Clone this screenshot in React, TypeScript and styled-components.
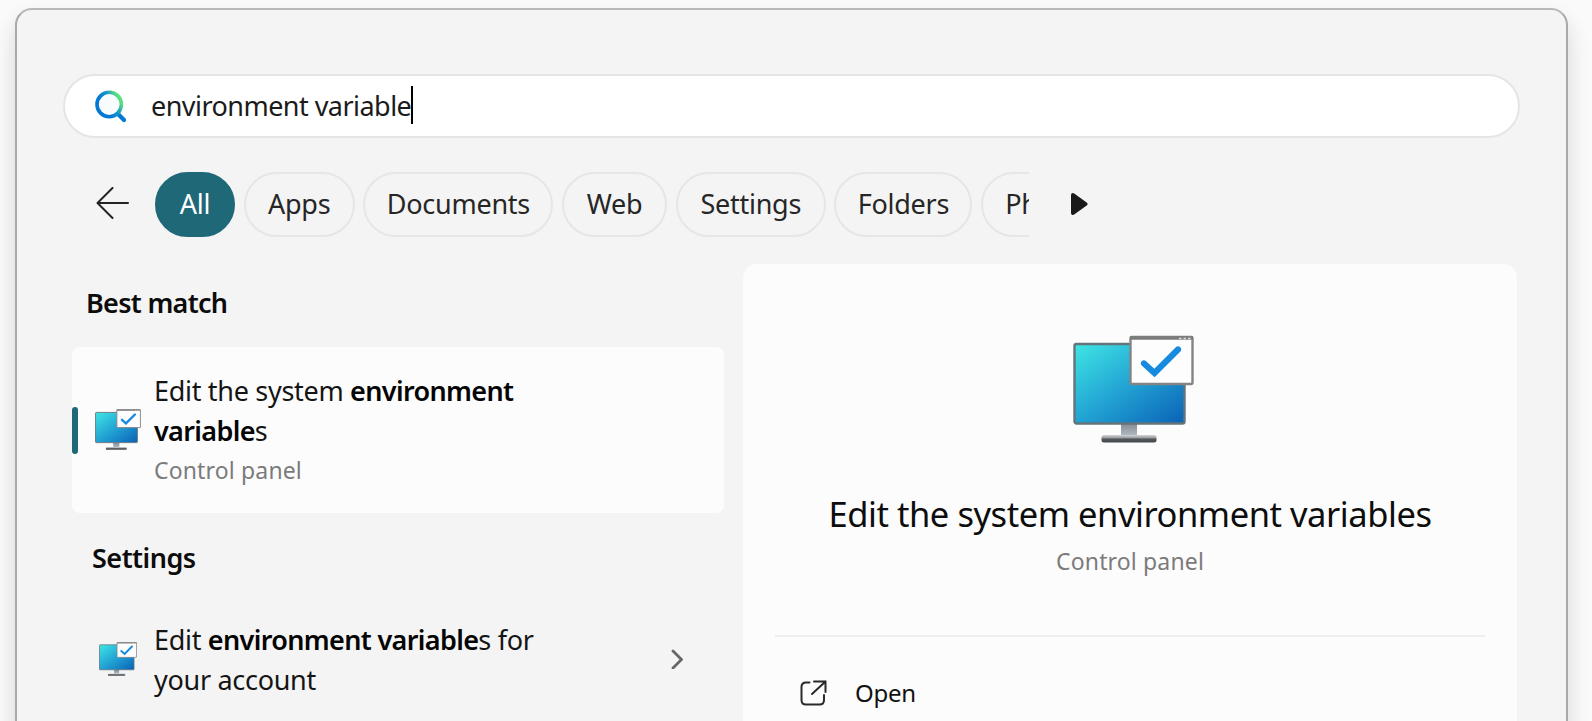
import React from "react";
import styled, { createGlobalStyle } from "styled-components";

const GlobalStyle = createGlobalStyle`
  * { box-sizing: border-box; }
  html, body { margin: 0; padding: 0; }
  body {
    background: #fafafa;
    font-family: "Noto Sans", "Open Sans", sans-serif;
    font-size: 27px;
    color: #1b1b1b;
    overflow: hidden;
  }
`;

const Desktop = styled.div`
  height: 721px;
  overflow: hidden;
  padding: 8px 24px 0 15px;
`;

const SearchWindow = styled.main`
  height: 800px;
  border: 2px solid #a9a9a9;
  border-top-color: #b9b9b9;
  border-radius: 17px;
  background: #f4f4f4;
  box-shadow: 0 12px 22px rgba(0, 0, 0, 0.14);
  padding: 64px 46px 0 46px;
`;

const SearchBox = styled.div`
  display: flex;
  align-items: center;
  width: 1457px;
  height: 64px;
  border: 2px solid #e5e5e5;
  border-radius: 32px;
  background: #fff;
  padding-left: 30px;
`;

const Query = styled.span`
  margin-left: 24px;
  padding-bottom: 1px;
  letter-spacing: -0.54px;
  white-space: nowrap;
`;

const Caret = styled.span`
  width: 2px;
  height: 38px;
  margin-bottom: 2px;
  background: #000;
`;

const FilterBar = styled.nav`
  display: flex;
  align-items: center;
  height: 66px;
  margin-top: 33px;
  padding-left: 32.5px;
`;

const ChipStrip = styled.div`
  display: flex;
  gap: 8.7px;
  width: 874px;
  margin: 0 41px 0 26.5px;
  overflow: hidden;
`;

const Chip = styled.div<{ $width: number; $active?: boolean }>`
  flex: none;
  display: flex;
  align-items: center;
  justify-content: center;
  width: ${(p) => p.$width}px;
  height: 65px;
  padding-bottom: 2px;
  border: 2px solid ${(p) => (p.$active ? "#1e6877" : "#e6e6e6")};
  border-radius: 33px;
  background: ${(p) => (p.$active ? "#1e6877" : "#f4f4f4")};
  color: ${(p) => (p.$active ? "#fff" : "#262626")};
  letter-spacing: -0.25px;
`;

const Columns = styled.div`
  display: flex;
  align-items: flex-start;
  padding-left: 9px;
  margin-top: 27px;
`;

const Results = styled.section`
  width: 652px;
  margin-right: 19px;
`;

const Heading = styled.h2<{ $top: number; $indent: number; $spacing: number }>`
  margin: 0;
  padding: ${(p) => p.$top}px 0 0 ${(p) => p.$indent}px;
  line-height: 40px;
  font-size: 27px;
  font-weight: 600;
  letter-spacing: ${(p) => p.$spacing}px;
  color: #0c0c0c;
`;

const Result = styled.div<{ $selected?: boolean }>`
  display: flex;
  align-items: center;
  height: ${(p) => (p.$selected ? 166 : 128)}px;
  margin-top: ${(p) => (p.$selected ? 24 : 17)}px;
  border-radius: 8px;
  background: ${(p) => (p.$selected ? "#fcfcfc" : "transparent")};
`;

const Accent = styled.span<{ $visible?: boolean }>`
  width: 6px;
  height: 47px;
  border-radius: 3px;
  background: ${(p) => (p.$visible ? "#1e6877" : "transparent")};
`;

const IconSlot = styled.span`
  display: flex;
  justify-content: center;
  width: 46px;
  margin: 0 13px 0 17px;
`;

const ResultText = styled.div<{ $top?: number; $bottom?: number }>`
  flex: 1;
  padding-top: ${(p) => p.$top ?? 0}px;
  padding-bottom: ${(p) => p.$bottom ?? 0}px;
  line-height: 40px;
  letter-spacing: -0.3px;
  color: #151515;
`;

const Match = styled.b`
  font-weight: 600;
  letter-spacing: -0.65px;
  color: #050505;
`;

const Kind = styled.div`
  line-height: 38px;
  font-size: 23px;
  letter-spacing: 0.15px;
  color: #7b7b7b;
`;

const ChevronSlot = styled.span`
  display: flex;
  margin-right: 40px;
`;

const Preview = styled.section`
  display: flex;
  flex-direction: column;
  align-items: center;
  width: 774px;
  height: 500px;
  padding: 71px 32px 0;
  border-radius: 14px;
  background: #fcfcfc;
`;

const PreviewIcon = styled.div`
  display: flex;
  padding-left: 7px;
`;

const Title = styled.h1`
  margin: 45px 0 3px;
  line-height: 50px;
  font-size: 34.5px;
  font-weight: 400;
  letter-spacing: -0.45px;
  color: #0d0d0d;
  white-space: nowrap;
`;

const Divider = styled.hr`
  width: 100%;
  height: 2px;
  margin: 55px 0 0;
  border: 0;
  background: #eee;
`;

const Action = styled.div`
  display: flex;
  align-items: center;
  align-self: stretch;
  gap: 28.5px;
  height: 60px;
  margin-top: 26px;
  padding-left: 24.5px;
  font-size: 24px;
  letter-spacing: -0.3px;
  color: #111;
`;

function MonitorIcon({ id, width }: { id: string; width: number }) {
  return (
    <svg width={width} height={width * 0.9} viewBox="0 0 121 108">
      <defs>
        <linearGradient id={`${id}-screen`} x1="0" y1="0" x2="1" y2="1">
          <stop offset="0" stopColor="#3fe6e4" />
          <stop offset="0.5" stopColor="#22a3d4" />
          <stop offset="1" stopColor="#0a62b6" />
        </linearGradient>
        <linearGradient id={`${id}-neck`} x1="0" y1="0" x2="0" y2="1">
          <stop offset="0" stopColor="#848b92" />
          <stop offset="1" stopColor="#b4bcc4" />
        </linearGradient>
        <linearGradient id={`${id}-foot`} x1="0" y1="0" x2="0" y2="1">
          <stop offset="0" stopColor="#d5d8da" />
          <stop offset="0.35" stopColor="#9fa3a6" />
          <stop offset="0.55" stopColor="#53575a" />
          <stop offset="1" stopColor="#45484b" />
        </linearGradient>
      </defs>
      <rect x="48" y="88" width="16" height="13" fill={`url(#${id}-neck)`} />
      <rect x="28.500" y="99.500" width="55" height="7.500" rx="2.500" fill={`url(#${id}-foot)`} />
      <rect x="1.500" y="8.500" width="110" height="79.500" rx="2" fill={`url(#${id}-screen)`} stroke="#64747a" strokeWidth="2.400" />
      <rect x="57.500" y="1.500" width="62" height="47" rx="1.500" fill="#fdfdfd" stroke="#848484" strokeWidth="2.400" />
      <path d="M57 2.400H120" stroke="#7c7c7c" strokeWidth="3.600" />
      <path d="M106 3h2.500M110.500 3h2.500M115 3h2.500" stroke="#ddd" strokeWidth="1.600" />
      <path d="M71 28 L81.500 37.500 L105 14" fill="none" stroke="#168ade" strokeWidth="6.200" strokeLinecap="round" />
    </svg>
  );
}

function SearchIcon() {
  return (
    <svg width="32" height="33" viewBox="0 0 32 33">
      <defs>
        <linearGradient id="lens" gradientUnits="userSpaceOnUse" x1="9" y1="16" x2="24" y2="7">
          <stop offset="0" stopColor="#0078d4" />
          <stop offset="0.5" stopColor="#1596c8" />
          <stop offset="0.95" stopColor="#5ae07f" />
        </linearGradient>
      </defs>
      <path d="M22.500 23.500 L29 30" stroke="#0078d4" strokeWidth="4.200" strokeLinecap="round" />
      <circle cx="14.200" cy="14.500" r="12.200" fill="#f8fcff" stroke="url(#lens)" strokeWidth="3.600" />
    </svg>
  );
}

const BackIcon = () => (
  <svg width="33" height="34" viewBox="0 0 33 34" fill="none" stroke="#222" strokeWidth="2" strokeLinecap="round" strokeLinejoin="round">
    <path d="M16.500 1 L1.500 16 L16.500 31 M1.500 16 H32" />
  </svg>
);

const NextIcon = () => (
  <svg width="18" height="24" viewBox="0 0 18 24">
    <path d="M3 3 L15.500 12 L3 21 Z" fill="#1a1a1a" stroke="#1a1a1a" strokeWidth="4" strokeLinejoin="round" />
  </svg>
);

const ChevronIcon = () => (
  <svg width="13" height="20" viewBox="0 0 13 20" fill="none" stroke="#666" strokeWidth="2.800" strokeLinecap="round" strokeLinejoin="round">
    <path d="M2 2 L10.500 10.500 L2 19" />
  </svg>
);

const OpenIcon = () => (
  <svg width="27" height="26" viewBox="0 0 27 26" fill="none" stroke="#2a2a2a" strokeWidth="2" strokeLinecap="round" strokeLinejoin="round">
    <path d="M9.500 2.500 H6 Q1.500 2.500 1.500 7 V20 Q1.500 24.500 6 24.500 H19.500 Q24 24.500 24 20 V15" />
    <path d="M14 1.500 H25.500 V12 M25.500 1.500 L12 14" />
  </svg>
);

const filters = [
  { label: "All", width: 80, active: true },
  { label: "Apps", width: 111 },
  { label: "Documents", width: 190 },
  { label: "Web", width: 105 },
  { label: "Settings", width: 150 },
  { label: "Folders", width: 138 },
  { label: "Photos", width: 135 },
];

export default function App() {
  return (
    <Desktop>
      <GlobalStyle />
      <SearchWindow>
        <SearchBox>
          <SearchIcon />
          <Query>environment variable</Query>
          <Caret />
        </SearchBox>
        <FilterBar>
          <BackIcon />
          <ChipStrip>
            {filters.map((f) => (
              <Chip key={f.label} $width={f.width} $active={f.active}>
                {f.label}
              </Chip>
            ))}
          </ChipStrip>
          <NextIcon />
        </FilterBar>
        <Columns>
          <Results>
            <Heading $top={19} $indent={14} $spacing={-0.7}>
              Best match
            </Heading>
            <Result $selected>
              <Accent $visible />
              <IconSlot>
                <MonitorIcon id="best" width={46} />
              </IconSlot>
              <ResultText $bottom={1}>
                Edit the system <Match>environment</Match>
                <br />
                <Match>variable</Match>s<Kind>Control panel</Kind>
              </ResultText>
            </Result>
            <Heading $top={25} $indent={20} $spacing={-0.5}>
              Settings
            </Heading>
            <Result>
              <Accent />
              <IconSlot>
                <MonitorIcon id="account" width={38} />
              </IconSlot>
              <ResultText $top={2}>
                Edit <Match>environment variable</Match>s for
                <br />
                your account
              </ResultText>
              <ChevronSlot>
                <ChevronIcon />
              </ChevronSlot>
            </Result>
          </Results>
          <Preview>
            <PreviewIcon>
              <MonitorIcon id="preview" width={121} />
            </PreviewIcon>
            <Title>Edit the system environment variables</Title>
            <Kind>Control panel</Kind>
            <Divider />
            <Action>
              <OpenIcon />
              Open
            </Action>
          </Preview>
        </Columns>
      </SearchWindow>
    </Desktop>
  );
}
